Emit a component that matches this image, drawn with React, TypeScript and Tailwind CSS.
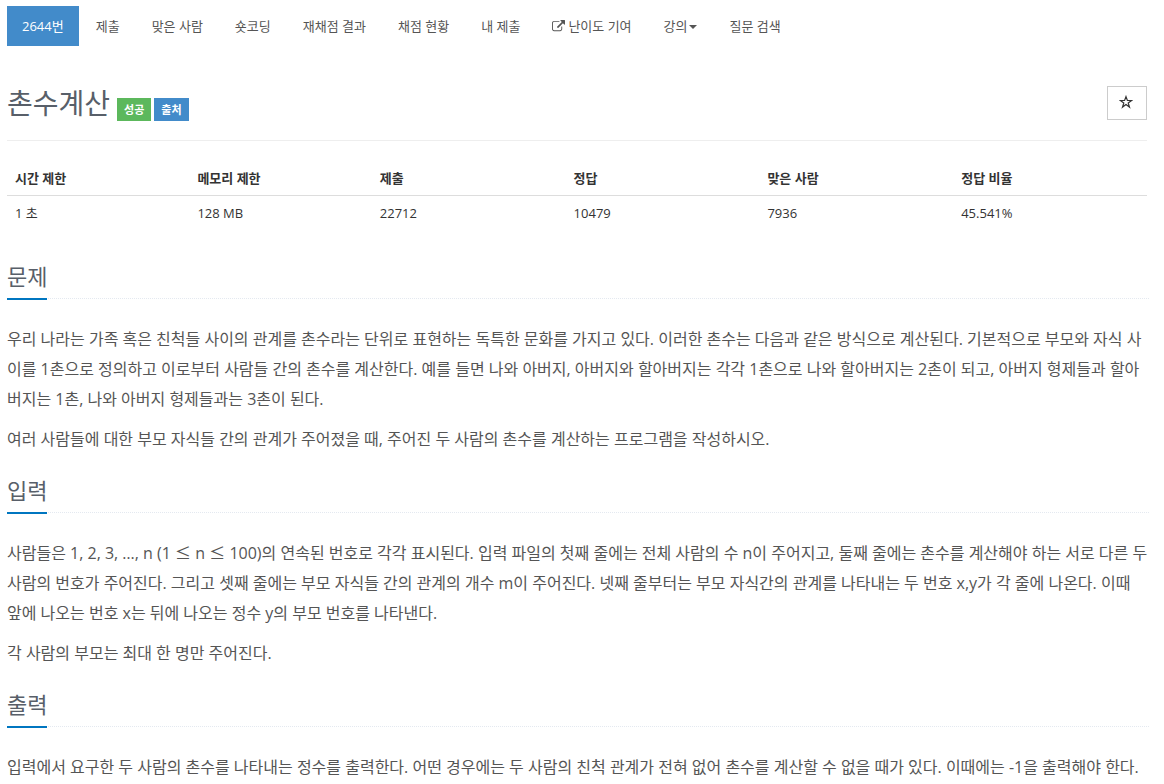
import type { ReactNode } from "react";

const menu = ["제출", "맞은 사람", "숏코딩", "재채점 결과", "채점 현황", "내 제출"];

const limits = [
  { label: "시간 제한", value: "1 초", width: "w-[16%]" },
  { label: "메모리 제한", value: "128 MB", width: "w-[16%]" },
  { label: "제출", value: "22712", width: "w-[17%]" },
  { label: "정답", value: "10479", width: "w-[17%]" },
  { label: "맞은 사람", value: "7936", width: "w-[17%]" },
  { label: "정답 비율", value: "45.541%", width: "w-[17%]" },
];

function ExternalLinkIcon() {
  return (
    <svg viewBox="0 0 1792 1792" className="size-[13px]" fill="currentColor" aria-hidden="true">
      <path d="M1408 928v320q0 119-84.5 203.5t-203.5 84.5h-832q-119 0-203.5-84.5t-84.5-203.5v-832q0-119 84.5-203.5t203.5-84.5h704q14 0 23 9t9 23v64q0 14-9 23t-23 9h-704q-66 0-113 47t-47 113v832q0 66 47 113t113 47h832q66 0 113-47t47-113v-320q0-14 9-23t23-9h64q14 0 23 9t9 23zm384-864v512q0 26-19 45t-45 19-45-19l-176-176-652 652q-10 10-23 10t-23-10l-114-114q-10-10-10-23t10-23l652-652-176-176q-19-19-19-45t19-45 45-19h512q26 0 45 19t19 45z" />
    </svg>
  );
}

function NavLink({ children, active = false }: { children: ReactNode; active?: boolean }) {
  return (
    <li>
      <a
        href="#"
        className={
          active
            ? "flex items-center bg-[#428bca] px-[15px] py-[10px] text-white"
            : "flex items-center px-[15px] py-[10px] text-[#555555]"
        }
      >
        {children}
      </a>
    </li>
  );
}

function LessOrEqual() {
  return <span className="font-['Noto_Sans_CJK_KR',sans-serif] leading-5">≤</span>;
}

function Section({ title, children }: { title: string; children: ReactNode }) {
  return (
    <section className="mb-[21px]">
      <div className="mb-[25px] flex border-b border-dotted border-[#e4e9f0]">
        <h2 className="-mb-[2px] border-b-2 border-[#0076c0] pb-[6px] text-[22px] leading-[31px] text-[#585f69]">
          {title}
        </h2>
      </div>
      <div className="space-y-[10px] text-[16px] leading-[30px] text-[#555555]">{children}</div>
    </section>
  );
}

export default function App() {
  return (
    <main className="bg-white py-[6px] pr-[15px] pl-[7px] font-['Open_Sans','Noto_Sans_CJK_KR',sans-serif] text-[13px] leading-5 text-[#333333]">
      <nav>
        <ul className="flex flex-wrap gap-[2px]">
          <NavLink active>2644번</NavLink>
          {menu.map((item) => (
            <NavLink key={item}>{item}</NavLink>
          ))}
          <NavLink>
            <span className="flex items-center gap-[3px]">
              <ExternalLinkIcon />
              난이도 기여
            </span>
          </NavLink>
          <NavLink>
            강의
            <svg viewBox="0 0 8 4" className="mx-px mt-[2px] h-1 w-2" fill="currentColor" aria-hidden="true">
              <path d="M0 0h8L4 4z" />
            </svg>
          </NavLink>
          <NavLink>질문 검색</NavLink>
        </ul>
      </nav>

      <div className="pr-[2px]">
        <header className="mt-[36px] flex items-start justify-between border-b border-[#eeeeee] pb-[16px]">
          <div className="flex items-end">
            <h1 className="text-[28px] leading-[42px] text-[#585f69]">촌수계산</h1>
            <div className="mb-[3px] ml-[7px] flex gap-[3px] text-[11px] leading-[23px] font-bold text-white">
              <span className="bg-[#5cb85c] px-[7px]">성공</span>
              <span className="bg-[#428bca] px-[7px]">출처</span>
            </div>
          </div>
          <button
            type="button"
            aria-label="즐겨찾기"
            className="mt-1 flex h-[34px] w-10 items-center justify-center border border-[#cccccc] bg-white pr-[2px] pb-[2px] text-[#333333]"
          >
            <svg viewBox="0 0 14 14" className="size-[14px]" fill="none" stroke="currentColor" strokeWidth="1.2" aria-hidden="true">
              <path d="M7 1.6l1.4 3.9h4.2L9.2 8l1.3 4.1L7 9.6l-3.5 2.5L4.800 8 1.4 5.5h4.2z" />
            </svg>
          </button>
        </header>

        <table className="mt-5 w-full table-fixed text-left">
          <thead>
            <tr className="border-b border-[#dddddd]">
              {limits.map((item) => (
                <th key={item.label} scope="col" className={`${item.width} px-2 py-[7px] font-bold`}>
                  {item.label}
                </th>
              ))}
            </tr>
          </thead>
          <tbody>
            <tr>
              {limits.map((item) => (
                <td key={item.label} className="px-2 py-[7px]">
                  {item.value}
                </td>
              ))}
            </tr>
          </tbody>
        </table>
      </div>

      <div className="mt-[31px]">
        <Section title="문제">
          <p>
            우리 나라는 가족 혹은 친척들 사이의 관계를 촌수라는 단위로 표현하는 독특한 문화를 가지고 있다. 이러한 촌수는 다음과 같은 방식으로 계산된다. 기본적으로 부모와 자식 사이를 1촌으로 정의하고 이로부터 사람들 간의 촌수를 계산한다. 예를 들면 나와 아버지, 아버지와 할아버지는 각각 1촌으로 나와 할아버지는 2촌이 되고, 아버지 형제들과 할아버지는 1촌, 나와 아버지 형제들과는 3촌이 된다.
          </p>
          <p>여러 사람들에 대한 부모 자식들 간의 관계가 주어졌을 때, 주어진 두 사람의 촌수를 계산하는 프로그램을 작성하시오.</p>
        </Section>
        <Section title="입력">
          <p>
            사람들은 1, 2, 3, …, n (1 <LessOrEqual /> n <LessOrEqual /> 100)의 연속된 번호로 각각 표시된다. 입력 파일의 첫째 줄에는 전체 사람의 수 n이 주어지고, 둘째 줄에는 촌수를 계산해야 하는 서로 다른 두 사람의 번호가 주어진다. 그리고 셋째 줄에는 부모 자식들 간의 관계의 개수 m이 주어진다. 넷째 줄부터는 부모 자식간의 관계를 나타내는 두 번호 x,y가 각 줄에 나온다. 이때 앞에 나오는 번호 x는 뒤에 나오는 정수 y의 부모 번호를 나타낸다.
          </p>
          <p>각 사람의 부모는 최대 한 명만 주어진다.</p>
        </Section>
        <Section title="출력">
          <p>입력에서 요구한 두 사람의 촌수를 나타내는 정수를 출력한다. 어떤 경우에는 두 사람의 친척 관계가 전혀 없어 촌수를 계산할 수 없을 때가 있다. 이때에는 -1을 출력해야 한다.</p>
        </Section>
      </div>
    </main>
  );
}
